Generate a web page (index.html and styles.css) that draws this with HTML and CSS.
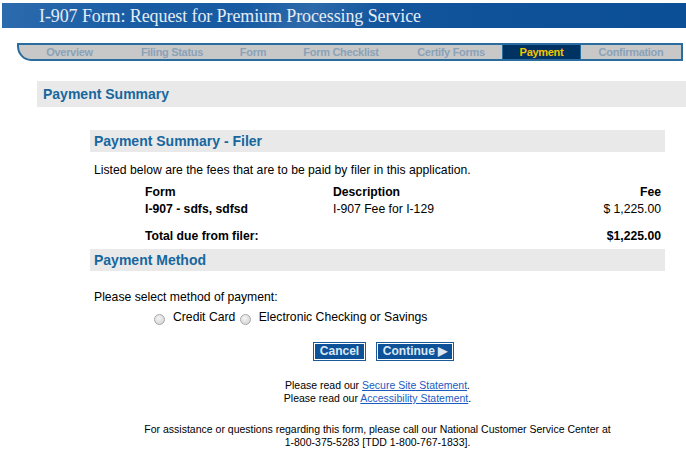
FILE: index.html
```html
<!DOCTYPE html>
<html lang="en">

<head>
    <meta charset="UTF-8">
    <meta name="viewport" content="width=device-width, initial-scale=1.0">
    <title>I-907 Payment</title>
    <link rel="stylesheet" href="styles.css">
</head>

<body>
    <div class="banner">
        <h1>I-907 Form: Request for Premium Processing Service</h1>
    </div>
    <ul class="tabs">
        <li class="tab overview">Overview</li>
        <li class="tab filing">Filing Status</li>
        <li class="tab form">Form</li>
        <li class="tab checklist">Form Checklist</li>
        <li class="tab certify">Certify Forms</li>
        <li class="tab payment current">Payment</li>
        <li class="tab confirm">Confirmation</li>
    </ul>
    <div class="page">
        <h2 class="section-head">Payment Summary</h2>
        <div class="content">
            <h3 class="sub-head">Payment Summary - Filer</h3>
            <p class="intro">Listed below are the fees that are to be paid by filer in this application.</p>
            <table class="fees">
                <tr>
                    <th class="col-form">Form</th>
                    <th class="col-desc">Description</th>
                    <th class="col-fee">Fee</th>
                </tr>
                <tr>
                    <td class="col-form strong">I-907 - sdfs, sdfsd</td>
                    <td class="col-desc">I-907 Fee for I-129</td>
                    <td class="col-fee">$ 1,225.00</td>
                </tr>
                <tr class="total">
                    <td class="col-form strong" colspan="2">Total due from filer:</td>
                    <td class="col-fee strong">$1,225.00</td>
                </tr>
            </table>
            <h3 class="sub-head method-head">Payment Method</h3>
            <p class="prompt">Please select method of payment:</p>
            <div class="methods">
                <label><input type="radio" name="method"> Credit Card</label>
                <label><input type="radio" name="method"> Electronic Checking or Savings</label>
            </div>
            <div class="actions">
                <button class="btn cancel">Cancel</button>
                <button class="btn continue">Continue &#9654;</button>
            </div>
            <div class="footer">
                <p>Please read our <a href="#">Secure Site Statement</a>.<br>
                    Please read our <a href="#">Accessibility Statement</a>.</p>
                <p>For assistance or questions regarding this form, please call our National Customer Service Center at<br>
                    1-800-375-5283 [TDD 1-800-767-1833].</p>
            </div>
        </div>
    </div>
</body>

</html>
```

FILE: styles.css
```css
body {
    margin: 0;
    font-family: "Liberation Sans", Arial, sans-serif;
    font-size: 12.2px;
    color: #000;
    background: #fff;
}

.banner {
    margin: 3px 0 0 2px;
    height: 25px;
    padding-left: 37px;
    background:
        linear-gradient(115deg, rgba(255, 255, 255, 0) 35%, rgba(255, 255, 255, 0.10) 45%, rgba(255, 255, 255, 0) 55%),
        linear-gradient(100deg, rgba(255, 255, 255, 0.08) 0%, rgba(255, 255, 255, 0) 20%),
        linear-gradient(90deg, #1a5ea6, #165aa2 40%, #0f5299 70%, #0b4f96);
}

.banner h1 {
    margin: 0;
    font-family: "Liberation Serif", "Times New Roman", serif;
    font-weight: normal;
    font-size: 18px;
    letter-spacing: -0.1px;
    line-height: 26px;
    color: #e4ecf5;
}

.tabs {
    display: flex;
    list-style: none;
    margin: 15px 0 0 17px;
    padding: 0;
    width: 662px;
    height: 14px;
    border: 2px solid #2b6c9e;
    border-bottom-left-radius: 14px 15px;
    background: #c8c8c8;
}

.tab {
    font-size: 11px;
    font-weight: bold;
    line-height: 14px;
    text-align: center;
    color: #8aa2b8;
    letter-spacing: -0.3px;
}

.overview { width: 101px; }
.filing { width: 104px; }
.form { width: 58px; }
.checklist { width: 118px; }
.certify { width: 102px; }
.payment { width: 77px; }
.confirm { flex: 1; }

.tab.current {
    background: #003262;
    color: #f5c400;
    border-left: 1px solid #2b6c9e;
    border-right: 1px solid #2b6c9e;
}

.page {
    margin: 20px 0 0 37px;
}

.section-head {
    margin: 0;
    height: 26px;
    padding-left: 6px;
    background: #e9e9e9;
    font-size: 14px;
    line-height: 26px;
    color: #17679e;
}

.content {
    margin: 23px 0 0 53px;
    width: 575px;
}

.sub-head {
    margin: 0;
    height: 22px;
    padding-left: 4px;
    background: #e9e9e9;
    font-size: 14px;
    line-height: 22px;
    color: #17679e;
}

.intro {
    margin: 11px 0 0 4px;
    line-height: 14px;
}

.fees {
    margin: 7px 0 0 55px;
    width: 516px;
    border-collapse: collapse;
}

.fees th,
.fees td {
    padding: 0;
    height: 17px;
    line-height: 17px;
    text-align: left;
    vertical-align: top;
}

.fees th,
.strong {
    font-weight: bold;
}

.col-form {
    width: 188px;
}

.fees .col-fee {
    text-align: right;
}

.fees .total td {
    padding-top: 10px;
}

.method-head {
    margin-top: 4px;
}

.prompt {
    margin: 19px 0 0 4px;
    line-height: 14px;
}

.methods {
    margin: 5px 0 0 63px;
    font-size: 12.2px;
    line-height: 16px;
}

.methods label {
    display: inline-flex;
    align-items: center;
}

.methods input {
    appearance: none;
    width: 11px;
    height: 11px;
    margin: 5px 8px 0 1px;
    border: 1px solid #a8a8a8;
    border-radius: 50%;
    background: radial-gradient(circle at 40% 35%, #f4f4f4, #cfcfcf);
}

.actions {
    display: flex;
    gap: 10px;
    margin: 13px 0 0 223px;
}

.btn {
    height: 19px;
    padding: 0 3px;
    border: 1px solid #1b5a98;
    box-shadow: inset 0 0 0 1px #fff;
    background: #0d5299;
    color: #dbe7f4;
    font-family: "Liberation Sans", Arial, sans-serif;
    font-size: 12px;
    font-weight: bold;
    line-height: 15px;
    white-space: nowrap;
    cursor: pointer;
}

.cancel {
    width: 53px;
}

.continue {
    width: 78px;
}

.footer {
    margin-top: 18px;
    text-align: center;
    font-size: 10.5px;
    line-height: 13px;
}

.footer p {
    margin: 0 0 18px;
}

.footer a {
    color: #1a5bbf;
}
```
